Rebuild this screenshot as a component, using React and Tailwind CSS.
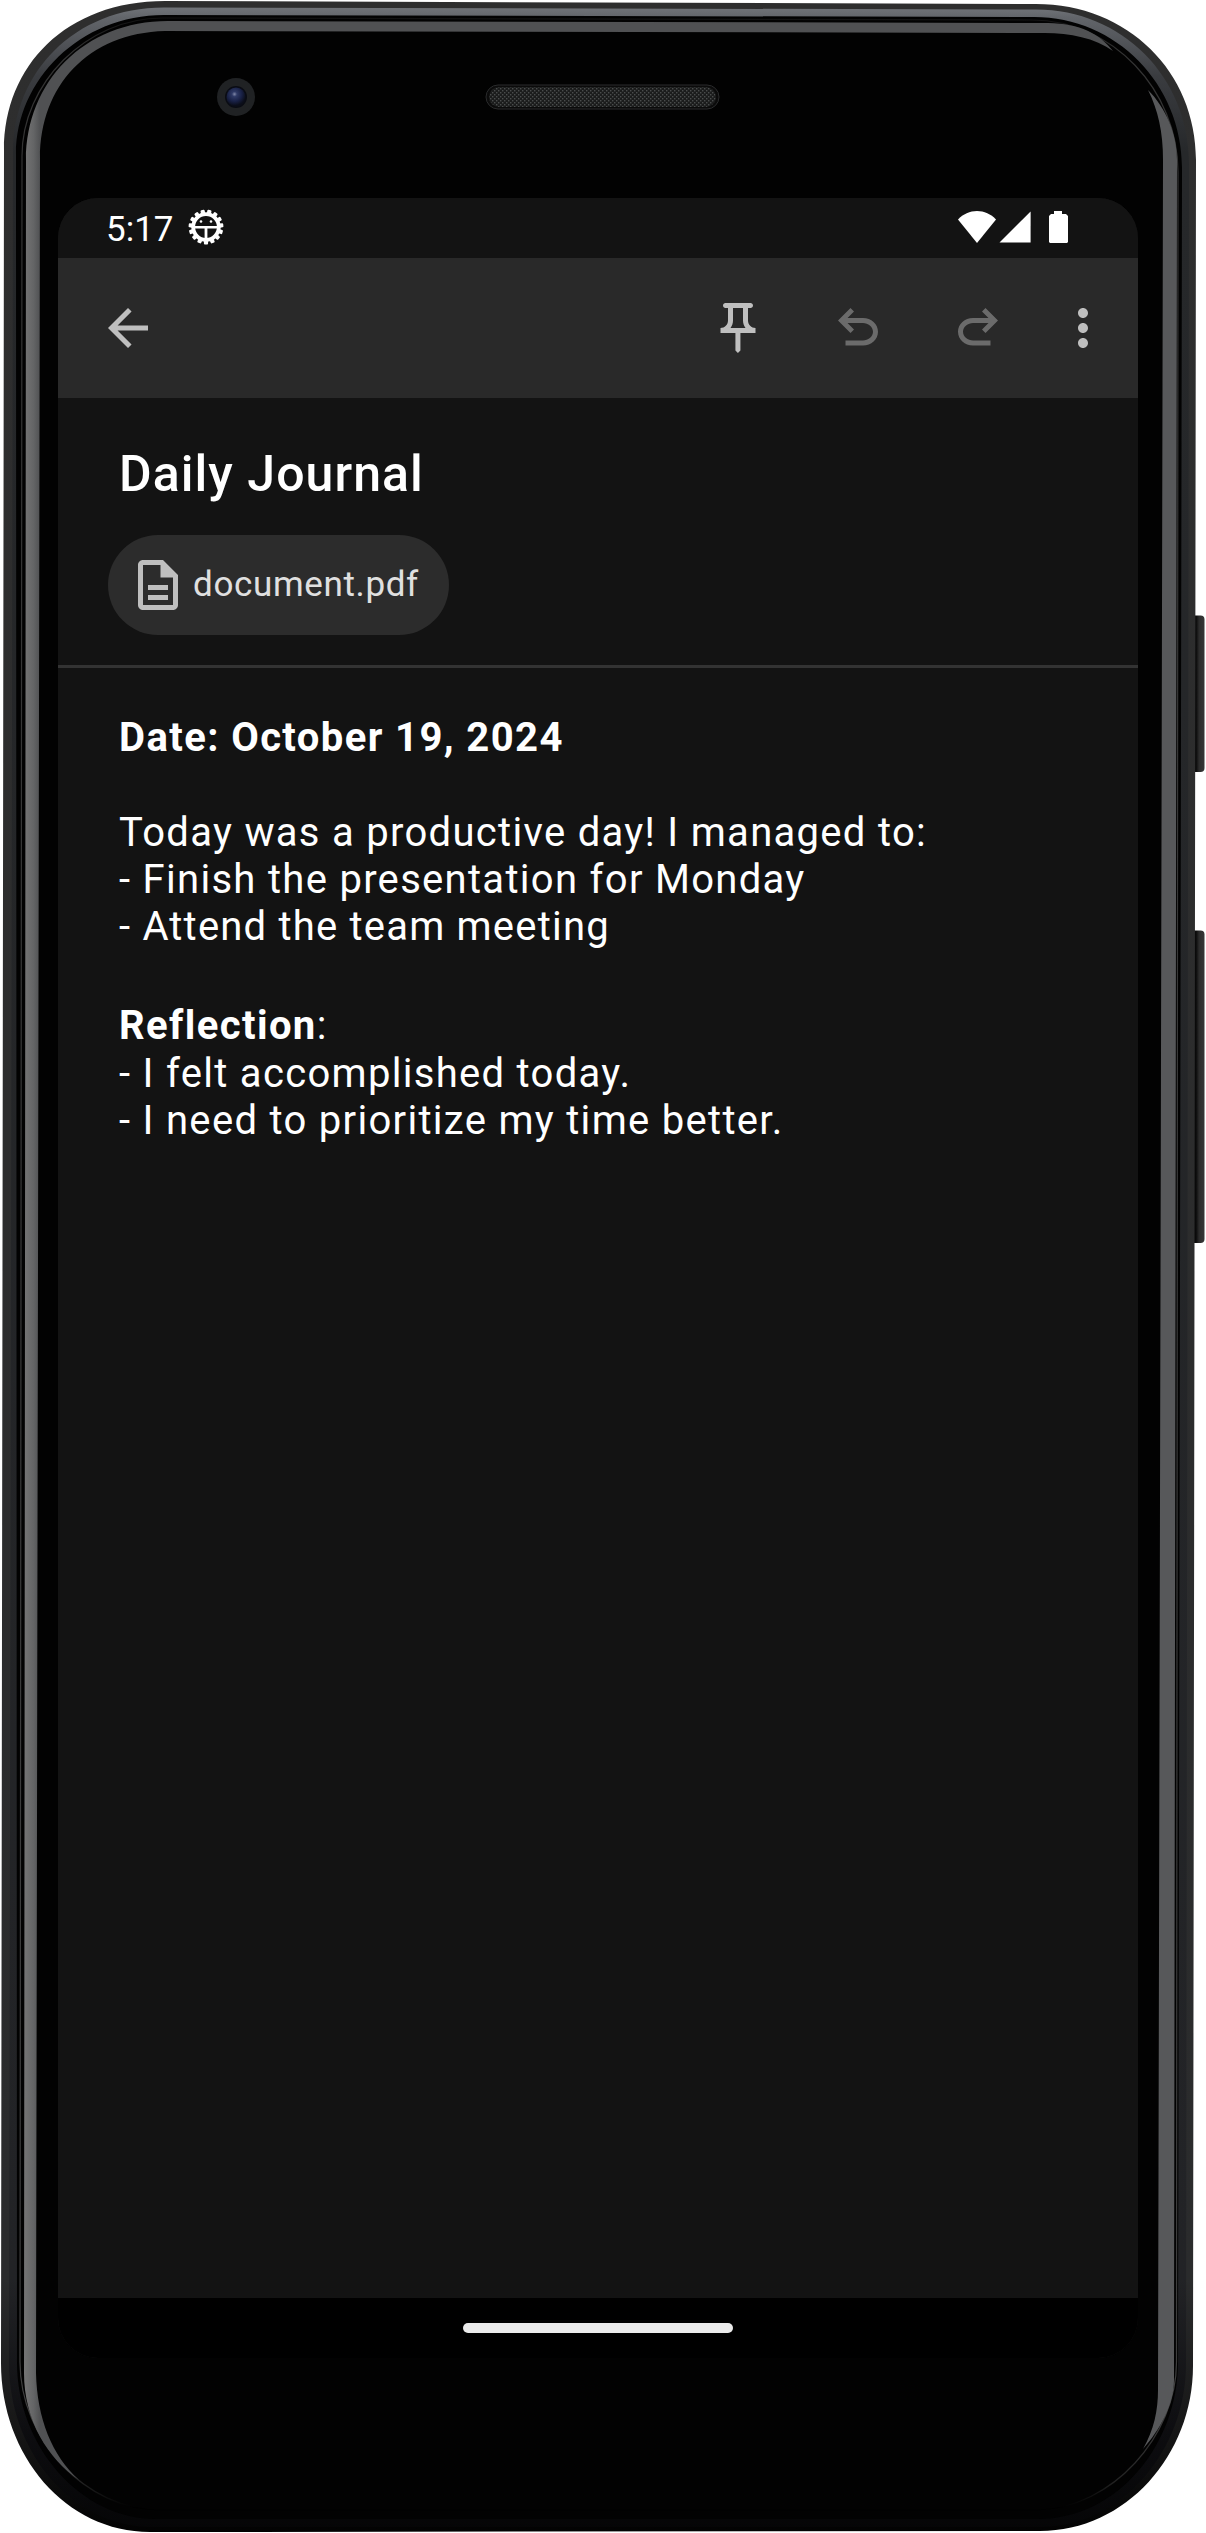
import React from "react";

const OUTER =
  "M4 150 C4 66 66 1 165 1 L1036 4 C1128 4 1196 72 1196 160 L1193 2366 C1193 2455 1126 2531 1040 2531 L150 2532 C66 2532 1 2456 1 2363 Z";
const RIM =
  "M13 152 C13 73 74 7.5 164 7.5 L1036 9.5 C1122 9.5 1189 77 1189 163 L1186 2364 C1186 2450 1122 2527 1040 2527 L152 2527 C72 2527 9 2452 9 2363 Z";
const GROOVE =
  "M16 154 C16 80 80 15 164 15 L1034 17 C1116 17 1182 84 1182 168 L1178 2362 C1178 2444 1118 2519 1038 2519 L156 2519 C82 2519 17 2448 17 2362 Z";
const HAIR =
  "M22 156 C22 84 86 18 162 18 L1032 20 C1112 20 1178 90 1178 172 L1176.5 2362 C1176.5 2436 1112 2508 1038 2510 L160 2510 C86 2510 20 2440 20 2362 Z";
const SHINE_LEFT =
  "M79 2480 C48 2459 24 2420 24 2373 L26 160 C26 82 84 21 168 21 L1048 23 C1080 23.5 1100 34 1113 51 C1095 38 1070 33 1045 33 L165 31 C88 33 40 86 40 158 L36 2373 C37 2418 52 2456 79 2480 Z";
const SHINE_RIGHT =
  "M1148 90 C1166 108 1177 134 1177 160 L1174 2380 C1174 2404 1160 2430 1143 2449 C1154 2430 1158 2410 1158 2390 L1163 160 C1163 132 1158 110 1148 90 Z";

function PhoneFrame() {
  return (
    <svg className="absolute inset-0" width="1206" height="2533" viewBox="0 0 1206 2533" aria-hidden="true">
      <defs>
        <linearGradient id="edge" x1="0" y1="0" x2="0" y2="2533" gradientUnits="userSpaceOnUse">
          <stop offset="0" stopColor="#2e2e2e" />
          <stop offset="0.9" stopColor="#2a2b2c" />
          <stop offset="0.96" stopColor="#161616" />
          <stop offset="1" stopColor="#020202" />
        </linearGradient>
        <linearGradient id="rim" x1="0" y1="0" x2="0" y2="2533" gradientUnits="userSpaceOnUse">
          <stop offset="0.003" stopColor="#707378" />
          <stop offset="0.007" stopColor="#62656a" />
          <stop offset="0.03" stopColor="#3a3c40" />
          <stop offset="0.06" stopColor="#26282a" />
          <stop offset="0.9" stopColor="#222326" />
          <stop offset="0.96" stopColor="#0d0d10" />
          <stop offset="1" stopColor="#050506" />
        </linearGradient>
        <linearGradient id="shineL" x1="24" y1="0" x2="40" y2="0" gradientUnits="userSpaceOnUse">
          <stop offset="0" stopColor="#757575" />
          <stop offset="0.6" stopColor="#646566" />
          <stop offset="1" stopColor="#505153" />
        </linearGradient>
        <linearGradient id="hair" x1="0" y1="0" x2="0" y2="2533" gradientUnits="userSpaceOnUse">
          <stop offset="0" stopColor="#000" />
          <stop offset="0.02" stopColor="#333" />
          <stop offset="0.95" stopColor="#3f3f3f" />
          <stop offset="0.98" stopColor="#222" />
          <stop offset="0.99" stopColor="#000" />
        </linearGradient>
        <radialGradient id="lens" cx="0.42" cy="0.35" r="0.6">
          <stop offset="0" stopColor="#8088a8" />
          <stop offset="0.22" stopColor="#2f3a66" />
          <stop offset="0.65" stopColor="#182044" />
          <stop offset="1" stopColor="#0b0e1a" />
        </radialGradient>
        <linearGradient id="button" x1="1196" y1="0" x2="1205" y2="0" gradientUnits="userSpaceOnUse">
          <stop offset="0" stopColor="#0a0a0a" />
          <stop offset="0.35" stopColor="#2c2c2c" />
          <stop offset="1" stopColor="#383838" />
        </linearGradient>
        <pattern id="mesh" width="4" height="4" patternUnits="userSpaceOnUse">
          <rect width="4" height="4" fill="#1b1c1c" />
          <rect width="1.4" height="1.4" fill="#4a4c4c" />
          <rect x="2" y="2" width="1.4" height="1.4" fill="#4a4c4c" />
        </pattern>
      </defs>
      <rect x="1190" y="615.500" width="14.500" height="156.500" rx="4" fill="url(#button)" />
      <rect x="1190" y="930.500" width="14.500" height="312.500" rx="4" fill="url(#button)" />
      <path d={OUTER} fill="url(#edge)" />
      <path d={RIM} fill="url(#rim)" />
      <path d={GROOVE} fill="#020202" />
      <path d={HAIR} fill="none" stroke="url(#hair)" strokeWidth="1.2" />
      <path d={SHINE_LEFT} fill="url(#shineL)" />
      <path d={SHINE_RIGHT} fill="#57585a" />
      <circle cx="236" cy="97" r="19" fill="#202224" />
      <circle cx="236" cy="97" r="11" fill="#0a0c14" />
      <circle cx="236" cy="97" r="9.500" fill="url(#lens)" />
      <rect x="486" y="85" width="233" height="24" rx="12" fill="#0b0b0b" stroke="#2a2b2c" />
      <rect x="489" y="87" width="227" height="20" rx="10" fill="url(#mesh)" />
    </svg>
  );
}

function Icon({ d, className }) {
  return (
    <svg className={`size-[60px] shrink-0 ${className}`} viewBox="0 0 24 24" fill="currentColor">
      <path d={d} />
    </svg>
  );
}

const ICONS = {
  back: "M7.825 13l5.6 5.6L12 20l-8-8 8-8 1.425 1.4-5.6 5.6H20v2H7.825z",
  pin: "M14 4v5c0 1.12.37 2.16 1 3H9c.65-.86 1-1.9 1-3V4h4m3-2H7c-.55 0-1 .45-1 1s.45 1 1 1h1v5c0 1.66-1.34 3-3 3v2h5.97v7l1 1 1-1v-7H19v-2c-1.66 0-3-1.34-3-3V4h1c.55 0 1-.45 1-1s-.45-1-1-1z",
  undo: "M7 19v-2h7c2 0 4-1.500 4-3.500S16 10 14 10H7.8l2.6 2.6L9 14 4 9l5-5 1.400 1.400L7.800 8H14c3.300 0 6 2.400 6 5.500S17.300 19 14 19z",
  redo: "M17 19v-2h-7c-2 0-4-1.500-4-3.500S8 10 10 10h6.200l-2.600 2.600L15 14l5-5-5-5-1.400 1.400L16.200 8H10c-3.300 0-6 2.400-6 5.500S6.700 19 10 19z",
  more: "M12 8c1.100 0 2-.9 2-2s-.9-2-2-2-2 .9-2 2 .9 2 2 2zm0 2c-1.100 0-2 .9-2 2s.9 2 2 2 2-.9 2-2-.9-2-2-2zm0 6c-1.100 0-2 .9-2 2s.9 2 2 2 2-.9 2-2-.9-2-2-2z",
  file: "M8 16h8v2H8zm0-4h8v2H8zm6-10H6c-1.100 0-2 .9-2 2v16c0 1.100.89 2 1.990 2H18c1.100 0 2-.9 2-2V8l-6-6zm4 18H6V4h7v5h5v11z",
};

function DebugIcon() {
  const teeth = Array.from({ length: 15 }, (_, i) => i * 24 + 180);
  return (
    <svg className="-mt-[1px] ml-[16px] h-[36px] w-[36px]" viewBox="-18 -18 36 36" fill="none" stroke="#fff">
      <circle r="12.800" strokeWidth="3.800" />
      {teeth.map((a) => (
        <path key={a} d="M-1.100 -14V-16.400H1.100V-14Z" strokeWidth="2" strokeLinejoin="round" fill="#fff" transform={`rotate(${a})`} />
      ))}
      <path d="M-12 0.200H12" strokeWidth="2.600" />
      <path d="M0 0V12" strokeWidth="2.800" />
      <circle cx="-5" cy="-5.500" r="1.300" fill="#fff" stroke="none" />
      <circle cx="5" cy="-5.500" r="1.300" fill="#fff" stroke="none" />
    </svg>
  );
}

function StatusBar() {
  return (
    <div className="flex h-[60px] items-start bg-[#131313] pt-[12px] pr-[70px] pl-[48px]">
      <span className="-mt-[1px] w-[66px] text-[35px] leading-[41px] whitespace-nowrap text-white">5:17</span>
      <DebugIcon />
      <div className="mt-[1px] ml-auto flex items-start">
        <svg width="38" height="32" viewBox="0 0 38 32" fill="#fff">
          <path d="M19 32L0 8.500C5 3 12 0 19 0s14 3 19 8.500z" />
        </svg>
        <svg className="ml-[3px]" width="32" height="32" viewBox="0 0 32 32" fill="#fff">
          <path d="M0.500 31.600H31.600V0.500z" />
        </svg>
        <svg className="ml-[18px]" width="19" height="32" viewBox="0 0 19 32" fill="#fff">
          <path d="M5 0h8v3h4l2 2V31l-1 1H1l-1-1V5L2 3H5z" />
        </svg>
      </div>
    </div>
  );
}

function Toolbar() {
  return (
    <div className="flex h-[140px] items-center bg-[#292929] pr-[25px] pl-[40px] text-[#bfbfbf]">
      <Icon d={ICONS.back} className="" />
      <div className="ml-auto flex items-center">
        <Icon d={ICONS.pin} className="" />
        <Icon d={ICONS.undo} className="ml-[60px] text-[#6b6b6b]" />
        <Icon d={ICONS.redo} className="ml-[60px] text-[#6b6b6b]" />
        <Icon d={ICONS.more} className="ml-[45px]" />
      </div>
    </div>
  );
}

function Note() {
  return (
    <div className="pt-[46px] pl-[61px] text-[40px] leading-[47px] tracking-[1.3px] whitespace-nowrap text-white">
      <p className="font-bold tracking-[1.4px]">Date: October 19, 2024</p>
      <p className="mt-[48px]">Today was a productive day! I managed to:</p>
      <p>- Finish the presentation for Monday</p>
      <p className="tracking-[1.2px]">- Attend the team meeting</p>
      <p className="mt-[52px]">
        <span className="font-bold tracking-[1.4px]">Reflection</span>:
      </p>
      <p className="mt-[1px]">- I felt accomplished today.</p>
      <p>- I need to prioritize my time better.</p>
    </div>
  );
}

export default function App() {
  return (
    <div className="relative h-[2533px] w-[1206px] overflow-hidden bg-white font-['Roboto',sans-serif]">
      <PhoneFrame />
      <div className="relative pt-[198px] pl-[58px]">
        <main className="flex h-[2160px] w-[1080px] flex-col overflow-hidden rounded-[40px] bg-[#131313]">
          <StatusBar />
          <Toolbar />
          <header className="h-[270px] border-b-[3px] border-[#333333] pl-[50px]">
            <h1 className="pt-[47px] pl-[11px] text-[50px] leading-[59px] font-medium tracking-[1.05px] whitespace-nowrap text-white">
              Daily Journal
            </h1>
            <div className="mt-[31px] flex h-[100px] w-[341px] items-center rounded-full bg-[#2c2c2c] pl-[20px]">
              <Icon d={ICONS.file} className="text-[#bfbfbf]" />
              <span className="-mt-[2px] ml-[5px] text-[35px] leading-[41px] tracking-[0.65px] whitespace-nowrap text-[#e0e0e0]">
                document.pdf
              </span>
            </div>
          </header>
          <Note />
          <div className="mt-auto flex h-[60px] shrink-0 items-start justify-center bg-black pt-[25px]">
            <div className="h-[10px] w-[270px] rounded-full bg-[#ebebeb]" />
          </div>
        </main>
      </div>
    </div>
  );
}
